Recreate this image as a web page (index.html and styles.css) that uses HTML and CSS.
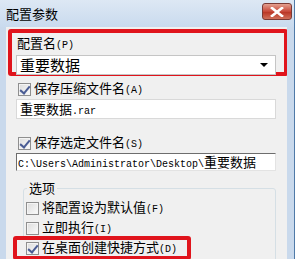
FILE: index.html
```html
<!DOCTYPE html>
<html lang="zh-CN">
<head>
    <meta charset="UTF-8">
    <title>配置参数</title>
    <link rel="stylesheet" href="styles.css">
</head>
<body>
    <div class="window">
        <div class="titlebar">
            <span class="title">配置参数</span>
            <span class="close-btn">
                <svg width="14" height="10" viewBox="0 0 14 10">
                    <path d="M2 1 L12 9 M12 1 L2 9" stroke="#fff" stroke-width="2.6" stroke-linecap="square"/>
                </svg>
            </span>
        </div>

        <div class="dialog">
            <!-- 配置名 -->
            <div class="mark mark-name">
                <div class="label">配置名<span class="half">(P)</span></div>
                <div class="combo">
                    <span class="combo-text">重要数据</span>
                    <span class="combo-arrow"></span>
                </div>
            </div>

            <div class="check-row">
                <span class="box checked"></span>
                <span>保存压缩文件名<span class="half">(A)</span></span>
            </div>
            <div class="field">重要数据<span class="half">.rar</span></div>

            <div class="check-row row-s">
                <span class="box checked"></span>
                <span>保存选定文件名<span class="half">(S)</span></span>
            </div>
            <div class="field field-dark"><span class="half">C:\Users\Administrator\Desktop\</span>重要数据</div>

            <!-- 选项 -->
            <fieldset class="group">
                <legend>选项</legend>
                <div class="check-row">
                    <span class="box"></span>
                    <span>将配置设为默认值<span class="half">(F)</span></span>
                </div>
                <div class="check-row">
                    <span class="box"></span>
                    <span>立即执行<span class="half">(I)</span></span>
                </div>
                <div class="mark mark-shortcut">
                    <div class="check-row">
                        <span class="box checked"></span>
                        <span>在桌面创建快捷方式<span class="half">(D)</span></span>
                    </div>
                </div>
                <div class="check-row">
                    <span class="box"></span>
                    <span>压缩后删除源文件</span>
                </div>
            </fieldset>
        </div>
    </div>
</body>
</html>
```

FILE: styles.css
```css
* {
    margin: 0;
    padding: 0;
    box-sizing: border-box;
}

body {
    font-family: "Noto Sans CJK SC", sans-serif;
    font-size: 13px;
    color: #000;
    background: #fff;
    overflow: hidden;
}

.window {
    width: 295px;
    height: 259px;
    background: #c9d9ec;
    border-right: 1px solid #4f7aa8;
    display: flex;
    flex-direction: column;
}

.titlebar {
    height: 27px;
    display: flex;
    justify-content: space-between;
    align-items: flex-start;
    padding-left: 6px;
    background: linear-gradient(#dde8f4, #c9daee);
}

.title {
    font-size: 13px;
    line-height: 16px;
    margin-top: 6px;
}

.close-btn {
    width: 30px;
    height: 17px;
    margin: 3px 2px 0 0;
    border: 1px solid #7b3a35;
    border-radius: 3px;
    background: linear-gradient(#e4a090, #c8493a 50%, #b83222 51%, #d0705a);
    display: flex;
    align-items: center;
    justify-content: center;
}

.dialog {
    flex: 1;
    min-height: 0;
    overflow: hidden;
    margin: 0 7px 0 6px;
    background: #f0f0f0;
    padding-top: 2px;
}

.half {
    font-family: "Liberation Mono", monospace;
    font-size: 10px;
}

.mark {
    border: 4px solid #e0141c;
    border-radius: 3px;
}

.mark-name {
    width: 280px;
    height: 47px;
    margin-left: 2px;
    padding: 2px 0 0 4px;
}

.label {
    line-height: 16px;
    padding-left: 1px;
}

.combo {
    width: 260px;
    height: 20px;
    margin-top: 1px;
    background: #fff;
    border: 1px solid #c5c5c5;
    display: flex;
    align-items: center;
    justify-content: space-between;
    padding: 0 7px 0 3px;
}

.combo-text {
    font-size: 15px;
    line-height: 18px;
}

.combo-arrow {
    width: 0;
    height: 0;
    border-left: 4px solid transparent;
    border-right: 4px solid transparent;
    border-top: 4px solid #000;
}

.check-row {
    display: flex;
    align-items: center;
    height: 16px;
    line-height: 16px;
    gap: 3px;
    margin-top: 5px;
    padding-left: 12px;
}

.row-s {
    margin-top: 16px;
}

.box {
    width: 13px;
    height: 13px;
    border: 1px solid #8f8f8f;
    background: linear-gradient(135deg, #dcdcdc, #fbfbfb);
    box-shadow: inset 0 0 0 1px #f4f4f4;
    position: relative;
}

.box.checked::after {
    content: "";
    position: absolute;
    left: 3px;
    top: 0;
    width: 4px;
    height: 8px;
    border-right: 2px solid #4a5c94;
    border-bottom: 2px solid #4a5c94;
    transform: rotate(40deg);
}

.field {
    width: 260px;
    height: 20px;
    margin: 2px 0 0 10px;
    background: #fff;
    border: 1px solid #d9d9d9;
    line-height: 18px;
    padding-left: 3px;
    font-size: 13px;
}

.field-dark {
    height: 18px;
    margin-top: 2px;
    line-height: 16px;
    padding-left: 1px;
    border-color: #6d6d6d #e3e3e3 #e3e3e3 #6d6d6d;
}

.group {
    margin: 9px 0 0 17px;
    width: 253px;
    border: 1px solid #d5dfe5;
    border-radius: 3px;
    padding: 0 0 0 2px;
    min-width: 0;
}

.group legend {
    margin-left: 1px;
    padding: 0 2px;
    line-height: 16px;
}

.group .check-row {
    margin-top: 4px;
    padding-left: 0;
}

.mark-shortcut {
    width: 178px;
    margin: 0 0 0 -13px;
    background: #f0f0f0;
    padding-left: 9px;
}

.mark-shortcut .check-row {
    margin-top: 0;
}

.mark-shortcut + .check-row {
    margin-top: 1px;
}
```
